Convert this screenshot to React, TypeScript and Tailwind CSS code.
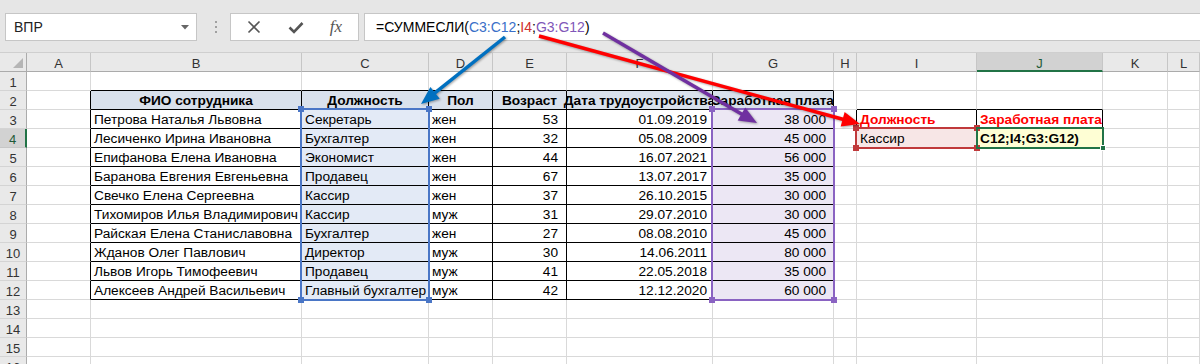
import React from 'react';

const COLS = ['A', 'B', 'C', 'D', 'E', 'F', 'G', 'H', 'I', 'J', 'K', 'L'];
const ROWS = Array.from({ length: 16 }, (_, i) => i + 1);

const names = [
  'Петрова Наталья Львовна',
  'Лесиченко Ирина Ивановна',
  'Епифанова Елена Ивановна',
  'Баранова Евгения Евгеньевна',
  'Свечко Елена Сергеевна',
  'Тихомиров Илья Владимирович',
  'Райская Елена Станиславовна',
  'Жданов Олег Павлович',
  'Львов Игорь Тимофеевич',
  'Алексеев Андрей Васильевич',
];
const positions = ['Секретарь', 'Бухгалтер', 'Экономист', 'Продавец', 'Кассир', 'Кассир', 'Бухгалтер', 'Директор', 'Продавец', 'Главный бухгалтер'];
const sex = ['жен', 'жен', 'жен', 'жен', 'жен', 'муж', 'жен', 'муж', 'муж', 'муж'];
const ages = ['53', '32', '44', '67', '37', '31', '27', '30', '41', '42'];
const dates = ['01.09.2019', '05.08.2009', '16.07.2021', '13.07.2017', '26.10.2015', '29.07.2010', '08.08.2010', '14.06.2011', '22.05.2018', '12.12.2020'];
const salaries = ['38 000', '45 000', '56 000', '35 000', '30 000', '30 000', '45 000', '80 000', '35 000', '60 000'];
const headers = ['ФИО сотрудника', 'Должность', 'Пол', 'Возраст', 'Дата трудоустройства', 'Заработная плата'];

function Arrow({ x1, y1, x2, y2, color }: { x1: number; y1: number; x2: number; y2: number; color: string }) {
  const dx = x2 - x1;
  const dy = y2 - y1;
  const len = Math.hypot(dx, dy);
  const ux = dx / len;
  const uy = dy / len;
  const L = 18;
  const W = 7.5;
  const bx = x2 - ux * L;
  const by = y2 - uy * L;
  const px = -uy;
  const py = ux;
  const pts = `${x2},${y2} ${bx + px * W},${by + py * W} ${bx - px * W},${by - py * W}`;
  return (
    <g>
      <line x1={x1} y1={y1} x2={bx + ux * 3} y2={by + uy * 3} stroke={color} strokeWidth={3.5} />
      <polygon points={pts} fill={color} />
    </g>
  );
}

function DataCell({ r, c }: { r: number; c: number }) {
  const inTable = r >= 2 && r <= 12;
  const rightBlack = (inTable && c >= 0 && c <= 6) || (r === 3 && c >= 7 && c <= 9);
  const bottomBlack = (r >= 1 && r <= 12 && c >= 1 && c <= 6) || (r >= 2 && r <= 3 && (c === 8 || c === 9));

  let bg = 'bg-white';
  if (r === 2 && c >= 1 && c <= 6) bg = 'bg-[#d9e1ec]';
  else if (r >= 3 && r <= 12 && c === 2) bg = 'bg-[#e3eaf6]';
  else if (r >= 3 && r <= 12 && c === 6) bg = 'bg-[#ece7f4]';
  else if (r === 4 && c === 8) bg = 'bg-[#f7e6e6]';
  else if (r === 4 && c === 9) bg = 'bg-[#fefed4]';

  let content: React.ReactNode = null;
  let align = 'justify-start pl-[3px]';
  let extra = 'overflow-hidden';
  let weight = 'font-normal';
  let color = 'text-black';

  if (r === 2 && c >= 1 && c <= 6) {
    content = headers[c - 1];
    align = 'justify-center';
    weight = 'font-bold';
    extra = c >= 5 ? 'overflow-visible' : 'overflow-hidden';
  } else if (r >= 3 && r <= 12 && c >= 1 && c <= 6) {
    const i = r - 3;
    if (c === 1) content = names[i];
    if (c === 2) content = positions[i];
    if (c === 3) content = sex[i];
    if (c === 4) {
      content = ages[i];
      align = 'justify-end pr-[8px]';
    }
    if (c === 5) {
      content = dates[i];
      align = 'justify-end pr-[5px]';
    }
    if (c === 6) {
      content = salaries[i];
      align = 'justify-end pr-[7px]';
    }
  } else if (r === 3 && c === 8) {
    content = 'Должность';
    weight = 'font-bold';
    color = 'text-[#ff0000]';
  } else if (r === 3 && c === 9) {
    content = 'Заработная плата';
    weight = 'font-bold';
    color = 'text-[#ff0000]';
  } else if (r === 4 && c === 8) {
    content = 'Кассир';
  } else if (r === 4 && c === 9) {
    content = 'C12;I4;G3:G12)';
    weight = 'font-bold';
  }

  return (
    <div
      className={`flex items-center whitespace-nowrap border-r border-b pt-[2px] text-[13.7px] leading-none ${bg} ${align} ${extra} ${weight} ${color} ${
        rightBlack ? 'border-r-black' : 'border-r-[#d9d9d9]'
      } ${bottomBlack ? 'border-b-black' : 'border-b-[#d9d9d9]'}`}
    >
      {content}
    </div>
  );
}

function Handle({ x, y, color }: { x: number; y: number; color: string }) {
  return <div className={`absolute h-[6px] w-[6px] ${color}`} style={{ left: x - 3, top: y - 3 }} />;
}

export default function App() {
  return (
    <div className="relative h-[364px] w-[1200px] overflow-hidden bg-[#e6e6e6] font-['Liberation_Sans',Arial,sans-serif] text-black">
      {/* Formula bar area */}
      <div className="flex h-[53px] items-start border-b border-[#cfcfcf] pt-[13px]">
        <div className="ml-[5px] flex h-[28px] w-[192px] items-center justify-between border border-[#c6c6c6] bg-white pl-[8px] pr-[7px] text-[14px] text-[#222]">
          <span>ВПР</span>
          <svg width="8" height="5" viewBox="0 0 8 5">
            <polygon points="0,0 8,0 4,4.5" fill="#666" />
          </svg>
        </div>
        <div className="ml-[17px] flex h-[28px] w-[4px] flex-col items-center justify-center gap-[3px]">
          <div className="h-[2px] w-[2px] bg-[#a0a0a0]" />
          <div className="h-[2px] w-[2px] bg-[#a0a0a0]" />
          <div className="h-[2px] w-[2px] bg-[#a0a0a0]" />
        </div>
        <div className="ml-[12px] flex h-[28px] w-[129px] items-center border border-[#c6c6c6] bg-white">
          <div className="flex w-[45px] justify-center pl-[1px]">
            <svg width="14" height="14" viewBox="0 0 14 14">
              <path d="M1.5 1.5 L12.5 12.5 M12.5 1.5 L1.5 12.5" stroke="#555" strokeWidth="1.6" />
            </svg>
          </div>
          <div className="flex w-[40px] justify-center">
            <svg width="16" height="13" viewBox="0 0 16 13">
              <path d="M1.5 6.5 L6 11 L14.5 2" stroke="#555" strokeWidth="2.6" fill="none" />
            </svg>
          </div>
          <div className="flex w-[40px] justify-center font-['Liberation_Serif',serif] text-[17px] italic text-[#555]">fx</div>
        </div>
        <div className="ml-[5px] flex h-[28px] flex-1 items-center border border-r-0 border-[#c6c6c6] bg-white pl-[11px] text-[14px]">
          <span className="text-black">=СУММЕСЛИ(</span>
          <span className="text-[#3a6fc8]">C3:C12</span>
          <span className="text-black">;</span>
          <span className="text-[#d0302f]">I4</span>
          <span className="text-black">;</span>
          <span className="text-[#8056b8]">G3:G12</span>
          <span className="text-black">)</span>
        </div>
      </div>

      {/* Sheet */}
      <div className="grid auto-rows-[19px] grid-cols-[27px_64px_211px_127px_64px_74px_146px_121px_23px_120px_126px_65px_1fr] bg-white">
        <div className="relative border-r border-b border-r-[#ababab] border-b-[#ababab] bg-[#e9e9e9]">
          <svg className="absolute right-[3px] bottom-[3px]" width="10" height="10" viewBox="0 0 10 10">
            <polygon points="10,0 10,10 0,10" fill="#b5b5b5" />
          </svg>
        </div>
        {COLS.map((l, i) =>
          i === 9 ? (
            <div
              key={l}
              className="flex items-center justify-center border-r border-b-2 border-r-[#c6c6c6] border-b-[#217346] bg-[#d2d2d2] pt-[3px] text-[13px] leading-none text-[#1f5a38]"
            >
              {l}
            </div>
          ) : (
            <div
              key={l}
              className="flex items-center justify-center border-r border-b border-r-[#c6c6c6] border-b-[#ababab] bg-[#e9e9e9] pt-[2px] text-[13px] leading-none text-[#333]"
            >
              {l}
            </div>
          )
        )}
        {ROWS.map((r) => (
          <React.Fragment key={r}>
            {r === 4 ? (
              <div className="flex items-center justify-center border-r-2 border-b border-r-[#217346] border-b-[#c6c6c6] bg-[#d2d2d2] pt-[2px] text-[13px] leading-none text-[#1f5a38]">
                {r}
              </div>
            ) : (
              <div className="flex items-center justify-center border-r border-b border-r-[#ababab] border-b-[#d4d4d4] bg-[#e9e9e9] pt-[2px] text-[13px] leading-none text-[#333]">
                {r}
              </div>
            )}
            {COLS.map((_, c) => (
              <DataCell key={c} r={r} c={c} />
            ))}
          </React.Fragment>
        ))}
      </div>

      {/* Range highlights (overlays) */}
      <div className="pointer-events-none absolute top-[108px] left-[300px] h-[193px] w-[130px] border-2 border-[#4a76c6]" />
      <Handle x={301} y={109} color="bg-[#4a76c6]" />
      <Handle x={429} y={109} color="bg-[#4a76c6]" />
      <Handle x={301} y={300} color="bg-[#4a76c6]" />
      <Handle x={429} y={300} color="bg-[#4a76c6]" />

      <div className="pointer-events-none absolute top-[108px] left-[711px] h-[193px] w-[124px] border-2 border-[#8a63c2]" />
      <Handle x={712} y={109} color="bg-[#8a63c2]" />
      <Handle x={834} y={109} color="bg-[#8a63c2]" />
      <Handle x={712} y={300} color="bg-[#8a63c2]" />
      <Handle x={834} y={300} color="bg-[#8a63c2]" />

      <div className="pointer-events-none absolute top-[127px] left-[855px] h-[22px] w-[123px] border-2 border-[#c0393b]" />
      <Handle x={856} y={128} color="bg-[#c0393b]" />
      <Handle x={977} y={128} color="bg-[#c0393b]" />
      <Handle x={856} y={148} color="bg-[#c0393b]" />
      <Handle x={977} y={148} color="bg-[#c0393b]" />

      <div className="pointer-events-none absolute top-[127px] left-[976px] h-[22px] w-[128px] border-2 border-[#217346]" />
      <div className="absolute top-[145px] left-[1100px] h-[6px] w-[6px] border border-white bg-[#217346]" />

      {/* Arrows */}
      <svg
        className="pointer-events-none absolute top-0 left-0 drop-shadow-[1px_1px_1px_rgba(0,0,0,0.35)]"
        width="1200"
        height="364"
        viewBox="0 0 1200 364"
      >
        <Arrow x1={505} y1={37} x2={421} y2={104} color="#0070c0" />
        <Arrow x1={539} y1={36} x2={860} y2={124} color="#ff0000" />
        <Arrow x1={603} y1={33} x2={757} y2={123} color="#7030a0" />
      </svg>
    </div>
  );
}
